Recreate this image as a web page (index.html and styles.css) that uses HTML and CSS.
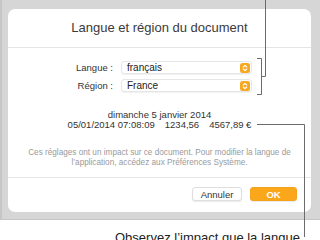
FILE: index.html
```html
<!DOCTYPE html>
<html lang="fr">
<head>
    <meta charset="UTF-8">
    <title>Langue et région du document</title>
    <link rel="stylesheet" href="styles.css">
</head>
<body>
    <div class="window">
        <div class="sheet">
            <div class="sheet-title">Langue et région du document</div>

            <div class="fields">
                <label class="field-label">Langue :</label>
                <div class="popup">
                    <span>français</span>
                    <svg class="stepper" width="10" height="10" viewBox="0 0 10 10">
                        <rect width="10" height="10" rx="2.5" fill="#f7a823"/>
                        <path d="M3.3 4 L5 2.4 L6.7 4 M3.3 6 L5 7.6 L6.7 6" fill="none" stroke="#fff" stroke-width="1.1" stroke-linecap="round" stroke-linejoin="round"/>
                    </svg>
                </div>
                <label class="field-label">Région :</label>
                <div class="popup">
                    <span>France</span>
                    <svg class="stepper" width="10" height="10" viewBox="0 0 10 10">
                        <rect width="10" height="10" rx="2.5" fill="#f7a823"/>
                        <path d="M3.3 4 L5 2.4 L6.7 4 M3.3 6 L5 7.6 L6.7 6" fill="none" stroke="#fff" stroke-width="1.1" stroke-linecap="round" stroke-linejoin="round"/>
                    </svg>
                </div>
            </div>

            <div class="sample">
                <div>dimanche 5 janvier 2014</div>
                <div class="sample-row">
                    <span>05/01/2014 07:08:09</span>
                    <span>1234,56</span>
                    <span>4567,89 €</span>
                </div>
            </div>

            <p class="note">Ces réglages ont un impact sur ce document. Pour modifier la langue de l’application, accédez aux Préférences Système.</p>

            <div class="actions">
                <button class="btn">Annuler</button>
                <button class="btn btn-ok">OK</button>
            </div>
        </div>
    </div>

    <div class="caption">Observez l’impact que la langue</div>

    <!-- callout lines -->
    <svg class="callouts" width="320" height="240" viewBox="0 0 320 240">
        <path d="M265.5 0 V76.5 H261.5 M257 58.5 H261.5 V94.5 H257" fill="none" stroke="#6b6b6b" stroke-width="1"/>
        <path d="M257 124.5 H304.5 V237" fill="none" stroke="#6b6b6b" stroke-width="1"/>
    </svg>
</body>
</html>
```

FILE: styles.css
```css
body {
    margin: 0;
    width: 320px;
    height: 240px;
    overflow: hidden;
    position: relative;
    background: #fff;
    font-family: 'Liberation Sans', Arial, sans-serif;
    color: #333;
}

.window {
    height: 220px;
    box-sizing: border-box;
    padding: 9px 9px 0 8px;
    background: #d6d6d6;
    border-left: 2px solid #c6c6c6;
    border-bottom: 1px solid #c6c6c6;
}

.sheet {
    height: 203px;
    margin-left: -2px;
    background: #fff;
    border-radius: 7px;
    display: flex;
    flex-direction: column;
}

.sheet-title {
    height: 38px;
    line-height: 38px;
    text-align: center;
    font-size: 13px;
    color: #3a3a3a;
    border-bottom: 1px solid #e4e4e4;
}

.fields {
    display: grid;
    grid-template-columns: 105px 131px;
    column-gap: 8px;
    row-gap: 5px;
    margin-top: 13px;
    align-items: center;
}

.field-label {
    text-align: right;
    font-size: 9.5px;
    color: #333;
}

.popup {
    height: 13px;
    box-sizing: border-box;
    display: flex;
    align-items: center;
    justify-content: space-between;
    padding: 0 1px 0 5px;
    border: 1px solid #e6e6e6;
    border-radius: 3px;
    box-shadow: 0 1px 1px rgba(0,0,0,0.06);
    font-size: 10px;
    color: #222;
}

.stepper {
    display: block;
}

.sample {
    margin-top: 18px;
    text-align: center;
    font-size: 9.5px;
    line-height: 10px;
    color: #333;
}

.sample-row {
    display: flex;
    justify-content: center;
    gap: 10px;
}

.note {
    margin: 18px 0 0;
    padding: 0 16px 10px;
    text-align: center;
    font-size: 8.2px;
    line-height: 9.5px;
    color: #9a9a9a;
    border-bottom: 1px solid #e8e8e8;
}

.actions {
    display: flex;
    justify-content: flex-end;
    gap: 8px;
    padding: 9px 14px 0 0;
}

.btn {
    width: 50px;
    height: 14px;
    padding: 0;
    font-family: inherit;
    font-size: 9.5px;
    color: #333;
    background: #fff;
    border: 1px solid #dedede;
    border-radius: 3px;
    box-shadow: 0 1px 1px rgba(0,0,0,0.08);
}

.btn-ok {
    width: 47px;
    color: #fff;
    font-weight: bold;
    background: #fba71b;
    border-color: #f6a11a;
}

.caption {
    text-align: right;
    padding: 10px 20px 0 0;
    font-size: 13px;
    color: #222;
}

.callouts {
    position: absolute;
    left: 0;
    top: 0;
    pointer-events: none;
}
```
